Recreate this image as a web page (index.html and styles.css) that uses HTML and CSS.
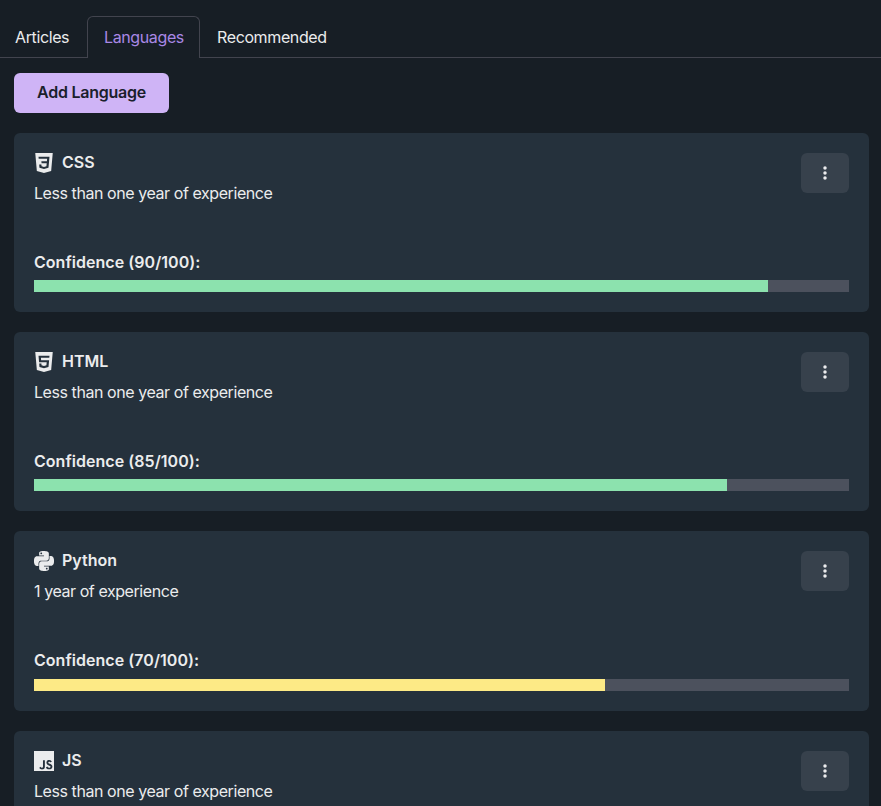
FILE: index.html
```
<!DOCTYPE html>
<html lang="en">
<head>
<meta charset="utf-8">
<title>Languages</title>
<link rel="stylesheet" href="styles.css">
</head>
<body>
<nav class="tabs">
  <a class="tab">Articles</a>
  <a class="tab active">Languages</a>
  <a class="tab">Recommended</a>
</nav>
<main class="panel">
  <button class="add">Add Language</button>
  <article class="card">
    <header class="head">
      <div>
        <h2 class="name"><svg class="icon" viewBox="0 0 24 24"><path fill-rule="evenodd" d="M1.5 0h21l-1.91 21.563L11.977 24l-8.565-2.438L1.5 0zm17.09 4.413L5.41 4.41l.213 2.622 10.125.002-.255 2.716h-6.64l.24 2.573h6.182l-.366 3.523-2.91.804-2.956-.81-.188-2.11h-2.61l.29 3.855L12 19.288l5.373-1.53L18.59 4.414z"/></svg><span>CSS</span></h2>
        <p class="exp">Less than one year of experience</p>
      </div>
      <button class="more" aria-label="Options"><svg viewBox="0 0 16 16"><circle cx="8" cy="3" r="1.75"/><circle cx="8" cy="8" r="1.75"/><circle cx="8" cy="13" r="1.75"/></svg></button>
    </header>
    <p class="conf">Confidence (90/100):</p>
    <div class="track"><div class="bar" style="width:90%"></div></div>
  </article>
  <article class="card">
    <header class="head">
      <div>
        <h2 class="name"><svg class="icon" viewBox="0 0 24 24"><path fill-rule="evenodd" d="M1.5 0h21l-1.91 21.563L11.977 24l-8.564-2.438L1.5 0zm7.031 9.75l-.232-2.718 10.059.003.23-2.622L5.412 4.41l.698 8.01h9.126l-.326 3.426-2.91.804-2.955-.81-.188-2.11H6.248l.33 4.171L12 19.351l5.379-1.443.744-8.157H8.531z"/></svg><span>HTML</span></h2>
        <p class="exp">Less than one year of experience</p>
      </div>
      <button class="more" aria-label="Options"><svg viewBox="0 0 16 16"><circle cx="8" cy="3" r="1.75"/><circle cx="8" cy="8" r="1.75"/><circle cx="8" cy="13" r="1.75"/></svg></button>
    </header>
    <p class="conf">Confidence (85/100):</p>
    <div class="track"><div class="bar" style="width:85%"></div></div>
  </article>
  <article class="card">
    <header class="head">
      <div>
        <h2 class="name"><svg class="icon" viewBox="0 0 24 24"><path d="M14.25.18l.9.2.73.26.59.3.45.32.34.34.25.34.16.33.1.3.04.26.02.2-.01.13V8.5l-.05.63-.13.55-.21.46-.26.38-.3.31-.33.25-.35.19-.35.14-.33.1-.3.07-.26.04-.21.02H8.77l-.69.05-.59.14-.5.22-.41.27-.33.32-.27.35-.2.36-.15.37-.1.35-.07.32-.04.27-.02.21v3.06H3.17l-.21-.03-.28-.07-.32-.12-.35-.18-.36-.26-.36-.36-.35-.46-.32-.59-.28-.73-.21-.88-.14-1.05-.05-1.23.06-1.22.16-1.04.24-.87.32-.71.36-.57.4-.44.42-.33.42-.24.4-.16.36-.1.32-.05.24-.01h.16l.06.01h8.16v-.83H6.18l-.01-2.75-.02-.37.05-.34.11-.31.17-.28.25-.26.31-.23.38-.2.44-.18.51-.15.58-.12.64-.1.71-.06.77-.04.84-.02 1.27.05zm-6.3 1.98l-.23.33-.08.41.08.41.23.34.33.22.41.09.41-.09.33-.22.23-.34.08-.41-.08-.41-.23-.33-.33-.22-.41-.09-.41.09zm13.09 3.95l.28.06.32.12.35.18.36.27.36.35.35.47.32.59.28.73.21.88.14 1.04.05 1.23-.06 1.23-.16 1.04-.24.86-.32.71-.36.57-.4.45-.42.33-.42.24-.4.16-.36.09-.32.05-.24.02-.16-.01h-8.22v.82h5.84l.01 2.76.02.36-.05.34-.11.31-.17.29-.25.25-.31.24-.38.2-.44.17-.51.15-.58.13-.64.09-.71.07-.77.04-.84.01-1.27-.04-1.07-.14-.9-.2-.73-.25-.59-.3-.45-.33-.34-.34-.25-.34-.16-.33-.1-.3-.04-.25-.02-.2.01-.13v-5.34l.05-.64.13-.54.21-.46.26-.38.3-.32.33-.24.35-.2.35-.14.33-.1.3-.06.26-.04.21-.02.13-.01h5.84l.69-.05.59-.14.5-.21.41-.28.33-.32.27-.35.2-.36.15-.36.1-.35.07-.32.04-.28.02-.21V6.07h2.09l.14.01zm-6.47 14.25l-.23.33-.08.41.08.41.23.33.33.23.41.08.41-.08.33-.23.23-.33.08-.41-.08-.41-.23-.33-.33-.23-.41-.08-.41.08z"/></svg><span>Python</span></h2>
        <p class="exp">1 year of experience</p>
      </div>
      <button class="more" aria-label="Options"><svg viewBox="0 0 16 16"><circle cx="8" cy="3" r="1.75"/><circle cx="8" cy="8" r="1.75"/><circle cx="8" cy="13" r="1.75"/></svg></button>
    </header>
    <p class="conf">Confidence (70/100):</p>
    <div class="track"><div class="bar medium" style="width:70%"></div></div>
  </article>
  <article class="card">
    <header class="head">
      <div>
        <h2 class="name"><svg class="icon" viewBox="0 0 24 24"><path fill-rule="evenodd" d="M0 0h24v24H0V0zm22.034 18.276c-.175-1.095-.888-2.015-3.003-2.873-.736-.345-1.554-.585-1.797-1.14-.091-.33-.105-.51-.046-.705.15-.646.915-.84 1.515-.66.39.12.75.42.976.9 1.034-.676 1.034-.676 1.755-1.125-.27-.42-.404-.601-.586-.78-.63-.705-1.469-1.065-2.834-1.034l-.705.089c-.676.165-1.32.525-1.71 1.005-1.14 1.291-.811 3.541.569 4.471 1.365 1.02 3.361 1.244 3.616 2.205.24 1.17-.87 1.545-1.966 1.41-.811-.18-1.26-.586-1.755-1.336l-1.83 1.051c.21.48.45.689.81 1.109 1.74 1.756 6.09 1.666 6.871-1.004.029-.09.24-.705.074-1.65l.046.067zm-8.983-7.245h-2.248c0 1.938-.009 3.864-.009 5.805 0 1.232.063 2.363-.138 2.711-.33.689-1.18.601-1.566.48-.396-.196-.597-.466-.83-.855-.063-.105-.11-.196-.127-.196l-1.825 1.125c.305.63.75 1.172 1.324 1.517.855.51 2.004.675 3.207.405.783-.226 1.458-.691 1.811-1.411.51-.93.402-2.07.397-3.346.012-2.054 0-4.109 0-6.179l.004-.056z"/></svg><span>JS</span></h2>
        <p class="exp">Less than one year of experience</p>
      </div>
      <button class="more" aria-label="Options"><svg viewBox="0 0 16 16"><circle cx="8" cy="3" r="1.75"/><circle cx="8" cy="8" r="1.75"/><circle cx="8" cy="13" r="1.75"/></svg></button>
    </header>
  </article>
</main>
</body>
</html>
```
FILE: styles.css
```
* { box-sizing: border-box; margin: 0; padding: 0; }
html, body { height: 100%; overflow: hidden; }
body {
  background: #171e25;
  color: #ebeced;
  font: 16px/24px Inter, "Liberation Sans", sans-serif;
}
.tabs {
  display: flex;
  height: 58px;
  padding-top: 16px;
  border-bottom: 1px solid #42444e;
}
.tab {
  height: 42px;
  padding: 8px 17px 0 15px;
  border: 1px solid transparent;
  border-bottom: 0;
  border-radius: 6px 6px 0 0;
  letter-spacing: -0.38px;
}
.tab:first-child { width: 87px; padding-left: 14px; }
.tab.active {
  width: 113px;
  padding-left: 16px;
  background: #171e25;
  border-color: #42444e;
  color: #a988e6;
}
.tab:last-child { padding-left: 16px; }
.panel { height: 748px; padding: 15px 12px 0 14px; overflow: hidden; }
.add {
  display: block;
  width: 155px;
  height: 40px;
  padding-bottom: 2px;
  margin-bottom: 20px;
  border: 0;
  border-radius: 6px;
  background: #cfb4f6;
  color: #1a202c;
  font: 600 16px/24px Inter, "Liberation Sans", sans-serif;
  letter-spacing: -0.25px;
}
.card {
  height: 179.2px;
  margin-bottom: 20px;
  padding: 20px;
  border-radius: 6px;
  background: #25313c;
}
.head { display: flex; justify-content: space-between; height: 97px; }
.name { display: flex; align-items: center; gap: 8px; height: 20px; font-size: 16px; font-weight: 600; }
.name span { padding-bottom: 2px; }
.icon { width: 20px; height: 20px; fill: #ebeced; }
.exp { margin-top: 8px; letter-spacing: -0.43px; }
.more {
  display: flex;
  align-items: center;
  justify-content: center;
  width: 48px;
  height: 40px;
  border: 0;
  border-radius: 6px;
  background: #37414c;
}
.more svg { width: 16px; height: 16px; fill: #ebeced; }
.conf { font-weight: 600; letter-spacing: 0.04px; }
.track { height: 12px; margin-top: 6.2px; background: #4c515d; }
.bar { height: 100%; background: #8ce2ae; }
.bar.medium { background: #fdea86; }
```
